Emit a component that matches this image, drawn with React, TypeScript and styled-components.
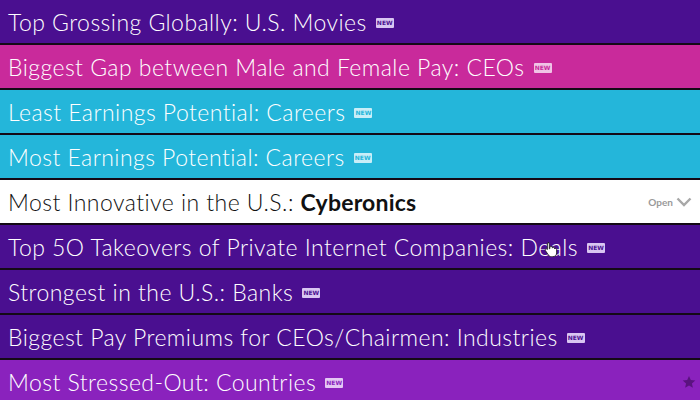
import React from "react";
import styled, { createGlobalStyle } from "styled-components";

const Global = createGlobalStyle`
  html, body { margin: 0; padding: 0; background: #120a18; overflow: hidden; }
  body { width: 700px; height: 400px; }
`;

type Tone = "purple" | "pink" | "cyan" | "white" | "violet";

const bg: Record<Tone, string> = {
  purple: "#4a0f90",
  pink: "#c92a9b",
  cyan: "#24b6da",
  white: "#ffffff",
  violet: "#8a22bd",
};
const badgeBg: Record<Tone, string> = {
  purple: "#d9c6f2",
  pink: "#f0c4e6",
  cyan: "#c9eef8",
  white: "#dddddd",
  violet: "#e4c8f4",
};

const List = styled.div`
  display: flex;
  flex-direction: column;
  width: 700px;
  height: 400px;
  overflow: hidden;
  position: relative;
`;

const Row = styled.div<{ $tone: Tone }>`
  flex: 0 0 43px;
  display: flex;
  align-items: center;
  padding: 0 8px;
  background: ${(p) => bg[p.$tone]};
  border-bottom: 2px solid #140a16;
  color: ${(p) => (p.$tone === "white" ? "#111" : "#fff")};
  font-family: Lato, "Noto Sans", sans-serif;
  font-weight: 300;
  font-size: 23px;
  letter-spacing: 0.45px;
  position: relative;
`;

const Title = styled.span`
  white-space: nowrap;
`;

const Strong = styled.b`
  font-weight: 700;
  letter-spacing: 0.2px;
`;

const Badge = styled.span<{ $tone: Tone }>`
  display: inline-flex;
  align-items: center;
  justify-content: center;
  margin-left: 9px;
  width: 18px;
  height: 10px;
  border-radius: 1px;
  background: ${(p) => badgeBg[p.$tone]};
  color: ${(p) => bg[p.$tone]};
  font-family: "DejaVu Sans", sans-serif;
  font-weight: 700;
  font-size: 6px;
  letter-spacing: 0;
  line-height: 1;
  margin-top: 2px;
`;

const OpenBox = styled.span`
  margin-left: auto;
  display: flex;
  align-items: center;
  gap: 3px;
  color: #9a9a9a;
  font-family: Lato, sans-serif;
  font-weight: 700;
  font-size: 10px;
  letter-spacing: 0;
`;

const Star = styled.svg`
  margin-left: auto;
  margin-right: -4px;
`;

const Cursor = styled.svg`
  position: absolute;
  left: 544px;
  top: 241px;
`;

const rows: { tone: Tone; text: React.ReactNode; extra?: "open" | "star"; badge?: boolean }[] = [
  { tone: "purple", text: "Top Grossing Globally: U.S. Movies", badge: true },
  { tone: "pink", text: "Biggest Gap between Male and Female Pay: CEOs", badge: true },
  { tone: "cyan", text: "Least Earnings Potential: Careers", badge: true },
  { tone: "cyan", text: "Most Earnings Potential: Careers", badge: true },
  {
    tone: "white",
    text: (
      <>
        Most Innovative in the U.S.: <Strong>Cyberonics</Strong>
      </>
    ),
    extra: "open",
  },
  { tone: "purple", text: "Top 5O Takeovers of Private Internet Companies: Deals", badge: true },
  { tone: "purple", text: "Strongest in the U.S.: Banks", badge: true },
  { tone: "purple", text: "Biggest Pay Premiums for CEOs/Chairmen: Industries", badge: true },
  { tone: "violet", text: "Most Stressed-Out: Countries", badge: true, extra: "star" },
];

export default function App() {
  return (
    <>
      <Global />
      <List>
        {rows.map((r, i) => (
          <Row key={i} $tone={r.tone}>
            <Title>{r.text}</Title>
            {r.badge && <Badge $tone={r.tone}>NEW</Badge>}
            {r.extra === "open" && (
              <OpenBox>
                Open
                <svg width="16" height="10" viewBox="0 0 16 10">
                  <path d="M1.5 1.5 L8 8 L14.5 1.5" fill="none" stroke="#a8a8a8" strokeWidth="2.4" />
                </svg>
              </OpenBox>
            )}
            {r.extra === "star" && (
              <Star width="14" height="14" viewBox="0 0 24 24">
                <path
                  d="M12 1.5l3.1 7.1 7.7.7-5.8 5.1 1.7 7.6L12 18l-6.7 4 1.7-7.6-5.8-5.1 7.7-.7z"
                  fill="#5a137f"
                />
              </Star>
            )}
          </Row>
        ))}
        <Cursor width="14" height="16" viewBox="0 0 14 16">
          <path
            d="M4 1.5c.8 0 1.3.6 1.3 1.3v5l.6-.2V6.5c0-.7.6-1.2 1.2-1.2s1.2.5 1.2 1.2v.6c.2-.5.6-.8 1.1-.8.6 0 1.1.5 1.1 1.1v.6c.2-.4.6-.6 1-.6.6 0 1.1.5 1.1 1.1v3.4c0 2.3-1.6 3.8-3.8 3.8H7.3c-1.3 0-2.1-.6-2.8-1.6L1.4 9.6c-.4-.6-.2-1.3.4-1.6.5-.3 1.1-.1 1.5.3l.1.2V2.8c0-.7.6-1.3 1.3-1.3z"
            fill="#fff"
            stroke="#222"
            strokeWidth="0.9"
          />
        </Cursor>
      </List>
    </>
  );
}
